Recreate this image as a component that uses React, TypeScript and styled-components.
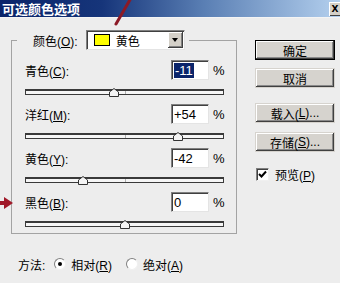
import React from 'react';
import styled, { createGlobalStyle } from 'styled-components';

const GlobalStyle = createGlobalStyle`
  html, body {
    margin: 0;
    padding: 0;
    background: #ededed;
  }
  body {
    font-family: "Liberation Sans", "Noto Sans CJK SC", sans-serif;
    font-size: 12px;
    color: #000;
  }
  * {
    box-sizing: border-box;
  }
`;

const Window = styled.div`
  position: relative;
  width: 340px;
  height: 283px;
  overflow: hidden;
  background: #ededed;
`;

const TitleBar = styled.div`
  height: 18px;
  display: flex;
  align-items: center;
  justify-content: space-between;
  padding-left: 2px;
  background: linear-gradient(to right, #0a246a 0%, #16357a 30%, #5a7fb4 60%, #b4d0ee 100%);
  border-bottom: 1px solid #f4f4f4;
`;

const Title = styled.span`
  color: #fff;
  font-family: "Noto Sans CJK SC", sans-serif;
  font-weight: bold;
  font-size: 13px;
  line-height: 16px;
`;

const CloseButton = styled.div`
  width: 12px;
  height: 14px;
  margin-right: -1px;
  display: flex;
  align-items: center;
  justify-content: center;
  background: #d4d0c8;
  box-shadow: inset 1px 1px #fff, inset 0 -1px #404040;
  font-family: "DejaVu Sans", sans-serif;
  font-size: 9px;
  font-weight: bold;
`;

const Body = styled.div`
  display: flex;
  padding: 12px 0 0 11px;
  gap: 18px;
`;

const LeftColumn = styled.div`
  width: 226px;
  display: flex;
  flex-direction: column;
`;

const Group = styled.fieldset`
  margin: 0;
  padding: 10px 0 5px 0;
  border: 1px solid #a3a3a3;
  min-width: 0;
`;

const Legend = styled.legend`
  margin-left: 5px;
  padding: 0 4px 0 16px;
  height: 20px;
  display: flex;
  align-items: center;
  gap: 8px;
`;

const Label = styled.span`
  white-space: nowrap;
`;

const U = styled.span`
  text-decoration: underline;
`;

const Dropdown = styled.div`
  width: 99px;
  height: 20px;
  display: flex;
  align-items: center;
  background: #fff;
  border: 1px solid;
  border-color: #808080 #e4e4e4 #e4e4e4 #808080;
  box-shadow: inset 1px 1px #404040;
`;

const Swatch = styled.div<{ $color: string }>`
  width: 16px;
  height: 12px;
  margin-left: 7px;
  background: ${(p) => p.$color};
  border: 1px solid #000;
`;

const DropdownText = styled.span`
  margin-left: 6px;
  font-size: 12px;
`;

const ArrowButton = styled.div`
  margin-left: auto;
  margin-right: 1px;
  width: 15px;
  height: 16px;
  display: flex;
  align-items: center;
  justify-content: center;
  background: #d4d0c8;
  box-shadow: inset -1px -1px #404040, inset 1px 1px #fff, inset -2px -2px #808080;

  &::after {
    content: '';
    border-left: 3.5px solid transparent;
    border-right: 3.5px solid transparent;
    border-top: 4px solid #000;
  }
`;

const Controls = styled.div`
  display: flex;
  flex-direction: column;
  gap: 8px;
  padding: 0 12px 0 13px;
`;

const Control = styled.div`
  display: flex;
  flex-direction: column;
  gap: 8px;
`;

const ValueRow = styled.div`
  height: 20px;
  display: flex;
  align-items: center;
`;

const RowLabel = styled(Label)`
  flex: 1;
`;

const NumberBox = styled.div`
  width: 38px;
  height: 20px;
  display: flex;
  align-items: center;
  padding-left: 2px;
  background: #fff;
  border: 1px solid;
  border-color: #808080 #e4e4e4 #e4e4e4 #808080;
  box-shadow: inset 1px 1px #404040;
  font-family: "Liberation Sans", sans-serif;
  font-size: 13px;
`;

const Selected = styled.span`
  background: #0a246a;
  color: #fff;
  padding: 0 1px;
  line-height: 15px;
`;

const Percent = styled.span`
  width: 11px;
  margin-left: 4px;
  font-family: "Liberation Sans", sans-serif;
  font-size: 13px;
`;

const Slider = styled.div`
  position: relative;
  height: 8px;
`;

const Track = styled.div`
  margin-top: 1px;
  height: 6px;
  background: #f6f6f6;
  border: 1px solid #3a3a3a;
  border-top-width: 2px;
  position: relative;

  &::after {
    content: '';
    position: absolute;
    left: 50%;
    top: 0;
    width: 1px;
    height: 3px;
    background: #b0b0b0;
  }
`;

const Thumb = styled.svg`
  position: absolute;
  top: 0;
  width: 10px;
  height: 9px;
`;

const MethodRow = styled.div`
  margin-top: 22px;
  padding-left: 7px;
  height: 16px;
  display: flex;
  align-items: center;
`;

const RadioOption = styled.div<{ $first?: boolean }>`
  display: flex;
  align-items: center;
  gap: 5px;
  margin-left: ${(p) => (p.$first ? '9px' : '14px')};
`;

const Radio = styled.div<{ $checked?: boolean }>`
  width: 12px;
  height: 12px;
  border-radius: 50%;
  background: #fff;
  border: 1px solid;
  border-color: #808080 #f0f0f0 #f0f0f0 #808080;
  display: flex;
  align-items: center;
  justify-content: center;

  &::after {
    content: '';
    width: 4px;
    height: 4px;
    border-radius: 50%;
    background: ${(p) => (p.$checked ? '#000' : 'transparent')};
  }
`;

const RightColumn = styled.div`
  width: 80px;
  padding-top: 10px;
  display: flex;
  flex-direction: column;
`;

const Button = styled.div<{ $default?: boolean; $gap?: number }>`
  height: 20px;
  margin-top: ${(p) => p.$gap ?? 0}px;
  display: flex;
  align-items: center;
  justify-content: center;
  background: #d6d3ce;
  border: 1px solid ${(p) => (p.$default ? '#000' : '#d6d3ce')};
  box-shadow: inset -1px -1px #404040, inset 1px 1px #fff, inset -2px -2px #8a8a8a;
  font-size: 12px;
`;

const CheckRow = styled.div`
  margin-top: 14px;
  margin-left: 1px;
  display: flex;
  align-items: center;
  gap: 6px;
`;

const CheckBox = styled.div`
  width: 13px;
  height: 13px;
  background: #fff;
  border: 1px solid;
  border-color: #808080 #f0f0f0 #f0f0f0 #808080;
  box-shadow: inset 1px 1px #404040;
  display: flex;
  align-items: center;
  justify-content: center;
`;

const Annotations = styled.svg`
  position: absolute;
  left: 0;
  top: 0;
  pointer-events: none;
`;

type Channel = {
  name: string;
  key: string;
  value: number;
  selected?: boolean;
};

const channels: Channel[] = [
  { name: '青色', key: 'C', value: -11, selected: true },
  { name: '洋红', key: 'M', value: 54 },
  { name: '黄色', key: 'Y', value: -42 },
  { name: '黑色', key: 'B', value: 0 },
];

const formatValue = (v: number) => (v > 0 ? `+${v}` : `${v}`);

const ChannelControl: React.FC<{ channel: Channel }> = ({ channel }) => {
  const pos = (channel.value + 100) / 2;
  return (
    <Control>
      <ValueRow>
        <RowLabel>
          {channel.name}(<U>{channel.key}</U>):
        </RowLabel>
        <NumberBox>
          {channel.selected ? (
            <Selected>{formatValue(channel.value)}</Selected>
          ) : (
            formatValue(channel.value)
          )}
        </NumberBox>
        <Percent>%</Percent>
      </ValueRow>
      <Slider>
        <Track />
        <Thumb viewBox="0 0 10 9" style={{ left: `calc(${pos}% - 5px)` }}>
          <polygon points="0.5,8.5 0.5,4 5,0.5 9.5,4 9.5,8.5" fill="#f4f4f4" stroke="#333" strokeWidth="1" />
        </Thumb>
      </Slider>
    </Control>
  );
};

export default function App() {
  return (
    <Window>
      <GlobalStyle />
      <TitleBar>
        <Title>可选颜色选项</Title>
        <CloseButton>X</CloseButton>
      </TitleBar>
      <Body>
        <LeftColumn>
          <Group>
            <Legend>
              <Label>
                颜色(<U>O</U>):
              </Label>
              <Dropdown>
                <Swatch $color="#ffff00" />
                <DropdownText>黄色</DropdownText>
                <ArrowButton />
              </Dropdown>
            </Legend>
            <Controls>
              {channels.map((c) => (
                <ChannelControl key={c.key} channel={c} />
              ))}
            </Controls>
          </Group>
          <MethodRow>
            <Label>方法:</Label>
            <RadioOption $first>
              <Radio $checked />
              <Label>
                相对(<U>R</U>)
              </Label>
            </RadioOption>
            <RadioOption>
              <Radio />
              <Label>
                绝对(<U>A</U>)
              </Label>
            </RadioOption>
          </MethodRow>
        </LeftColumn>
        <RightColumn>
          <Button $default>确定</Button>
          <Button $gap={8}>取消</Button>
          <Button $gap={15}>
            载入(<U>L</U>)...
          </Button>
          <Button $gap={9}>
            存储(<U>S</U>)...
          </Button>
          <CheckRow>
            <CheckBox>
              <svg width="9" height="9" viewBox="0 0 9 9">
                <path d="M1 4 L3.5 6.5 L8 1.5" fill="none" stroke="#000" strokeWidth="2" />
              </svg>
            </CheckBox>
            <Label>
              预览(<U>P</U>)
            </Label>
          </CheckRow>
        </RightColumn>
      </Body>
      <Annotations width="340" height="283" viewBox="0 0 340 283">
        <path d="M131 -2 L116 24" stroke="#8c1a26" strokeWidth="3" strokeLinecap="round" />
        <rect x="0" y="201" width="6" height="4" fill="#a01828" />
        <polygon points="4,197 13,203 4,209" fill="#a01828" />
      </Annotations>
    </Window>
  );
}
